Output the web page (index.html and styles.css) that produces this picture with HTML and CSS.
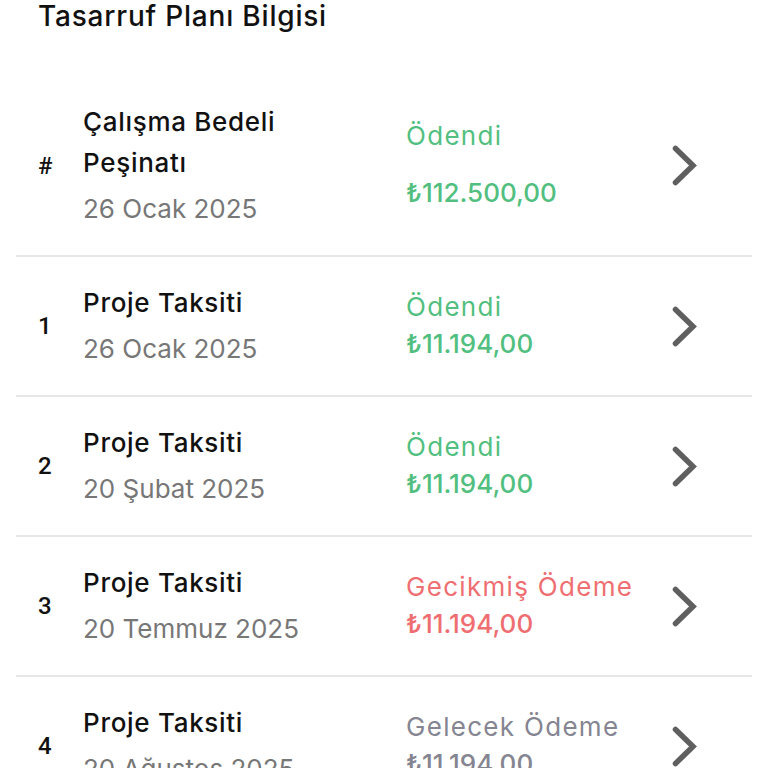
FILE: index.html
```html
<!DOCTYPE html>
<html lang="tr">
<head>
<meta charset="UTF-8">
<meta name="viewport" content="width=device-width, initial-scale=1.0">
<title>Tasarruf Planı Bilgisi</title>
<link rel="stylesheet" href="styles.css">
</head>
<body>
  <h1 class="page-title">Tasarruf Planı Bilgisi</h1>

  <ul class="plan-list">
    <li class="plan-row">
      <span class="plan-index">#</span>
      <div class="plan-main">
        <div class="plan-name">Çalışma Bedeli Peşinatı</div>
        <div class="plan-date">26 Ocak 2025</div>
      </div>
      <div class="plan-status paid">
        <span class="status-label">Ödendi</span>
        <span class="status-amount">₺112.500,00</span>
      </div>
      <svg class="chevron" viewBox="0 0 25 41"><polyline points="3.5,3.5 21,20.5 3.5,37.5"/></svg>
    </li>
    <li class="plan-row">
      <span class="plan-index">1</span>
      <div class="plan-main">
        <div class="plan-name">Proje Taksiti</div>
        <div class="plan-date">26 Ocak 2025</div>
      </div>
      <div class="plan-status paid">
        <span class="status-label">Ödendi</span>
        <span class="status-amount">₺11.194,00</span>
      </div>
      <svg class="chevron" viewBox="0 0 25 41"><polyline points="3.5,3.5 21,20.5 3.5,37.5"/></svg>
    </li>
    <li class="plan-row">
      <span class="plan-index">2</span>
      <div class="plan-main">
        <div class="plan-name">Proje Taksiti</div>
        <div class="plan-date">20 Şubat 2025</div>
      </div>
      <div class="plan-status paid">
        <span class="status-label">Ödendi</span>
        <span class="status-amount">₺11.194,00</span>
      </div>
      <svg class="chevron" viewBox="0 0 25 41"><polyline points="3.5,3.5 21,20.5 3.5,37.5"/></svg>
    </li>
    <li class="plan-row">
      <span class="plan-index">3</span>
      <div class="plan-main">
        <div class="plan-name">Proje Taksiti</div>
        <div class="plan-date">20 Temmuz 2025</div>
      </div>
      <div class="plan-status late">
        <span class="status-label">Gecikmiş Ödeme</span>
        <span class="status-amount">₺11.194,00</span>
      </div>
      <svg class="chevron" viewBox="0 0 25 41"><polyline points="3.5,3.5 21,20.5 3.5,37.5"/></svg>
    </li>
    <li class="plan-row">
      <span class="plan-index">4</span>
      <div class="plan-main">
        <div class="plan-name">Proje Taksiti</div>
        <div class="plan-date">20 Ağustos 2025</div>
      </div>
      <div class="plan-status upcoming">
        <span class="status-label">Gelecek Ödeme</span>
        <span class="status-amount">₺11.194,00</span>
      </div>
      <svg class="chevron" viewBox="0 0 25 41"><polyline points="3.5,3.5 21,20.5 3.5,37.5"/></svg>
    </li>
  </ul>
</body>
</html>
```

FILE: styles.css
```css
body {
  margin: 0;
  padding: 0;
  font-family: Inter, "Open Sans", sans-serif;
  background-color: #fff;
  color: #111;
}

.page-title {
  margin: 0;
  padding: 0 38px;
  font-size: 28px;
  line-height: 32px;
  font-weight: 500;
  letter-spacing: 0.8px;
  color: #111;
}

.plan-list {
  list-style: none;
  margin: 44px 16px 0;
  padding: 0;
}
.plan-row {
  display: flex;
  align-items: stretch;
  padding: 25px 0 25px 22px;
  border-bottom: 2px solid #e6e6e6;
}
.plan-index {
  flex: 0 0 45px;
  align-self: center;
  font-family: Roboto, sans-serif;
  font-size: 24px;
  font-weight: 500;
  line-height: 1;
  color: #111;
}
.plan-main {
  flex: 0 0 323px;
  box-sizing: border-box;
  padding-right: 40px;
}
.plan-name {
  font-size: 26px;
  line-height: 41px;
  font-weight: 500;
  letter-spacing: 0.7px;
  color: #111;
}
.plan-date {
  margin-top: 4px;
  font-size: 26px;
  line-height: 43px;
  color: #777;
}

.plan-status {
  flex: 1;
  display: flex;
  flex-direction: column;
  justify-content: space-around;
  padding: 6px 0 8px;
}
.status-label {
  font-size: 26px;
  line-height: 24px;
  letter-spacing: 1.3px;
}
.status-amount {
  font-size: 26px;
  line-height: 24px;
  font-weight: 500;
}
.paid { color: #52bf80; }
.late { color: #ee6e72; }
.upcoming { color: #858591; }

.chevron {
  flex: 0 0 25px;
  align-self: center;
  width: 25px;
  height: 41px;
  margin-right: 55px;
  fill: none;
  stroke: #5f5f5f;
  stroke-width: 5.5;
  stroke-linecap: round;
  stroke-linejoin: miter;
}
```
